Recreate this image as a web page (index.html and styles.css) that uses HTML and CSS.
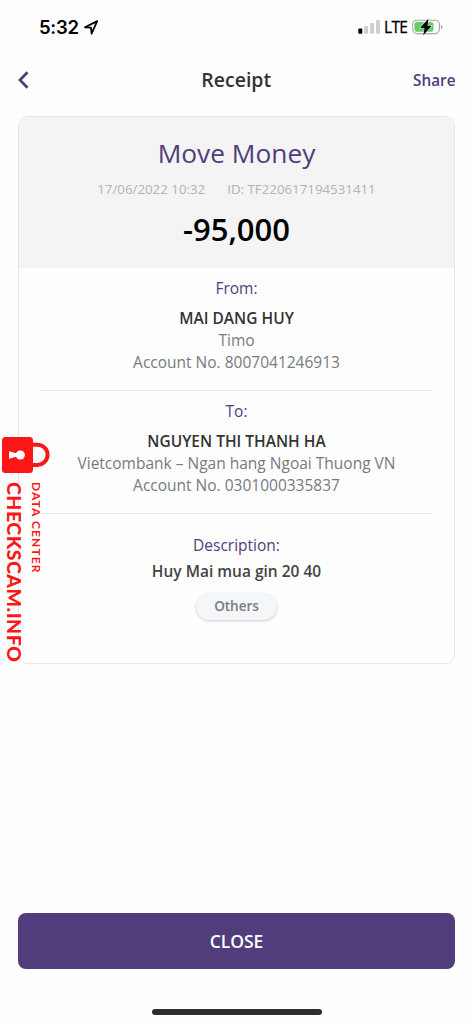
FILE: index.html
```html
<!DOCTYPE html>
<html lang="en">
<head>
<meta charset="utf-8">
<title>Receipt</title>
<link rel="stylesheet" href="styles.css">
</head>
<body>
<div class="screen">
  <div class="status">
    <span class="time">5:32</span>
    <svg class="location" width="17" height="17" viewBox="0 0 17 17"><path d="M2 8.3 14.2 2.1 8.6 14.6 8 8.6Z" fill="none" stroke="#000" stroke-width="1.8" stroke-linejoin="round"/></svg>
    <svg class="signal" width="23" height="16" viewBox="0 0 23 16"><rect x="0.3" y="9.6" width="4" height="5.2" rx="1"/><g fill="#cfcfcf"><rect x="6.2" y="7" width="4" height="7.8" rx="1"/><rect x="12.1" y="4" width="4" height="10.8" rx="1"/><rect x="18" y="1" width="4" height="13.8" rx="1"/></g></svg>
    <span class="lte">LTE</span>
    <svg class="battery" width="31" height="18" viewBox="0 0 31 18"><rect x="0.8" y="2.2" width="26.6" height="13.4" rx="4" fill="#fff" stroke="#a5a5a5" stroke-width="1.1"/><path d="M28.8 7q1.8.6 1.8 2t-1.8 2z" fill="#a5a5a5"/><rect x="2.5" y="4" width="19" height="9.8" rx="2.3" fill="#65cc69"/><path d="M16 1.5 8.6 9.8H13L11.7 16.6 19 8H15Z" fill="#000" stroke="#fff" stroke-width="1.6" paint-order="stroke"/><path d="M16 1.5 8.6 9.8H13L11.7 16.6 19 8H15Z" stroke="#000" stroke-width=".6"/></svg>
  </div>
  <div class="nav">
    <svg class="back" width="14" height="20" viewBox="0 0 14 20"><path d="M10.5 2.3 3 10l7.5 7.7" fill="none" stroke="#513c7c" stroke-width="2.7"/></svg>
    <span class="title">Receipt</span>
    <span class="share">Share</span>
  </div>
  <div class="card">
    <div class="summary">
      <div class="kind">Move Money</div>
      <div class="meta"><span>17/06/2022 10:32</span><span>ID: TF220617194531411</span></div>
      <div class="amount">-95,000</div>
    </div>
    <div class="party">
      <div class="label">From:</div>
      <div class="name">MAI DANG HUY</div>
      <div class="detail">Timo</div>
      <div class="detail">Account No. 8007041246913</div>
    </div>
    <div class="party">
      <div class="label">To:</div>
      <div class="name">NGUYEN THI THANH HA</div>
      <div class="detail">Vietcombank – Ngan hang Ngoai Thuong VN</div>
      <div class="detail">Account No. 0301000335837</div>
    </div>
    <div class="description">
      <div class="label">Description:</div>
      <div class="note">Huy Mai mua gin 20 40</div>
      <div class="tag">Others</div>
    </div>
  </div>
  <div class="close">CLOSE</div>
  <div class="home"></div>
  <div class="watermark">
    <svg width="50" height="38" viewBox="0 0 50 38"><path d="M31 8.7h6.5a10.1 10.1 0 0 1 0 20.2H31" fill="none" stroke="#ff1717" stroke-width="4"/><rect x="2" y="1" width="31" height="36" rx="3.5" fill="#ff1717"/><circle cx="20.3" cy="19" r="4.6" fill="#fff"/><path d="M9 15.2 17 17.4v3.2L9 22.8Z" fill="#fff"/></svg>
    <div class="marks"><span class="site">CHECKSCAM.INFO</span><span class="center">DATA CENTER</span></div>
  </div>
</div>
</body>
</html>
```
FILE: styles.css
```css
* { box-sizing: border-box; }
body { margin: 0; background: #fefefe; font-family: "Open Sans", "Noto Sans", sans-serif; }
.screen { position: relative; width: 473px; height: 1024px; overflow: hidden; white-space: nowrap; }
.status { display: flex; align-items: center; height: 54px; padding: 0 30px 0 39px; }
.time { font: 600 18.5px/24px Inter, sans-serif; letter-spacing: -0.3px; width: 42px; }
.location { margin-left: 2px; }
.signal { margin-left: auto; }
.lte { width: 24px; margin: 0 4px 0 3px; font: 500 15.5px/24px "Open Sans", sans-serif; letter-spacing: -0.7px; color: #000; -webkit-text-stroke: 0.3px #000; }
.nav { display: grid; grid-template-columns: 1fr auto 1fr; align-items: center; height: 52px; padding: 0 17.5px 0 17px; }
.title { font-size: 19.5px; font-weight: 600; line-height: 26px; padding-bottom: 1px; color: #333; }
.share { font-size: 15.3px; font-weight: 600; color: #513c7c; text-align: right; }
.card { margin: 10px 18px 0; height: 548px; border: 1px solid #e6e6e6; border-radius: 10px; overflow: hidden; text-align: center; }
.summary { height: 151px; padding-top: 16px; background: #f4f4f4; }
.kind { font-size: 26.3px; line-height: 40px; color: #513c7c; }
.meta { display: flex; justify-content: center; gap: 22px; margin-top: 6px; font-size: 13.3px; line-height: 20px; color: #b3b3b3; }
.amount { margin-top: 10px; font-size: 31px; font-weight: 600; line-height: 40px; color: #000; }
.party { height: 123px; margin: 0 21px; padding-top: 9px; border-bottom: 1px solid #e5e5e5; }
.label { font-size: 15.5px; line-height: 22px; color: #513c7c; }
.name { margin-top: 8px; font-size: 15.5px; font-weight: 600; line-height: 22px; color: #333; }
.detail { font-size: 15.5px; line-height: 22px; color: #777a80; }
.description { padding-top: 20px; }
.note { margin-top: 4px; font-size: 15.5px; font-weight: 600; line-height: 22px; color: #444; }
.tag { width: 81px; height: 27px; margin: 11px auto 0; border-radius: 14px; background: #f4f6f8; box-shadow: 0 1px 3px #0003; font-size: 13.5px; font-weight: 600; line-height: 27px; color: #747c87; }
.close { margin: 249px 18px 0; height: 56px; border-radius: 8px; background: #513c7c; color: #fff; font-size: 17.5px; font-weight: 600; letter-spacing: -0.1px; line-height: 57px; text-align: center; }
.home { width: 170px; height: 6px; margin: 40px auto 0; border-radius: 3px; background: #2d2d2d; }
.watermark { position: absolute; left: 0; top: 436px; color: #ff1717; }
.watermark svg { display: block; }
.marks { display: flex; align-items: flex-start; gap: 5px; margin: 8px 0 0 4px; }
.marks span { writing-mode: vertical-rl; font-family: Lato, sans-serif; }
.site { font-size: 19.5px; font-weight: 900; line-height: 20px; letter-spacing: 0.5px; }
.center { font-size: 12px; font-weight: 700; line-height: 14px; letter-spacing: 1.1px; }
```
